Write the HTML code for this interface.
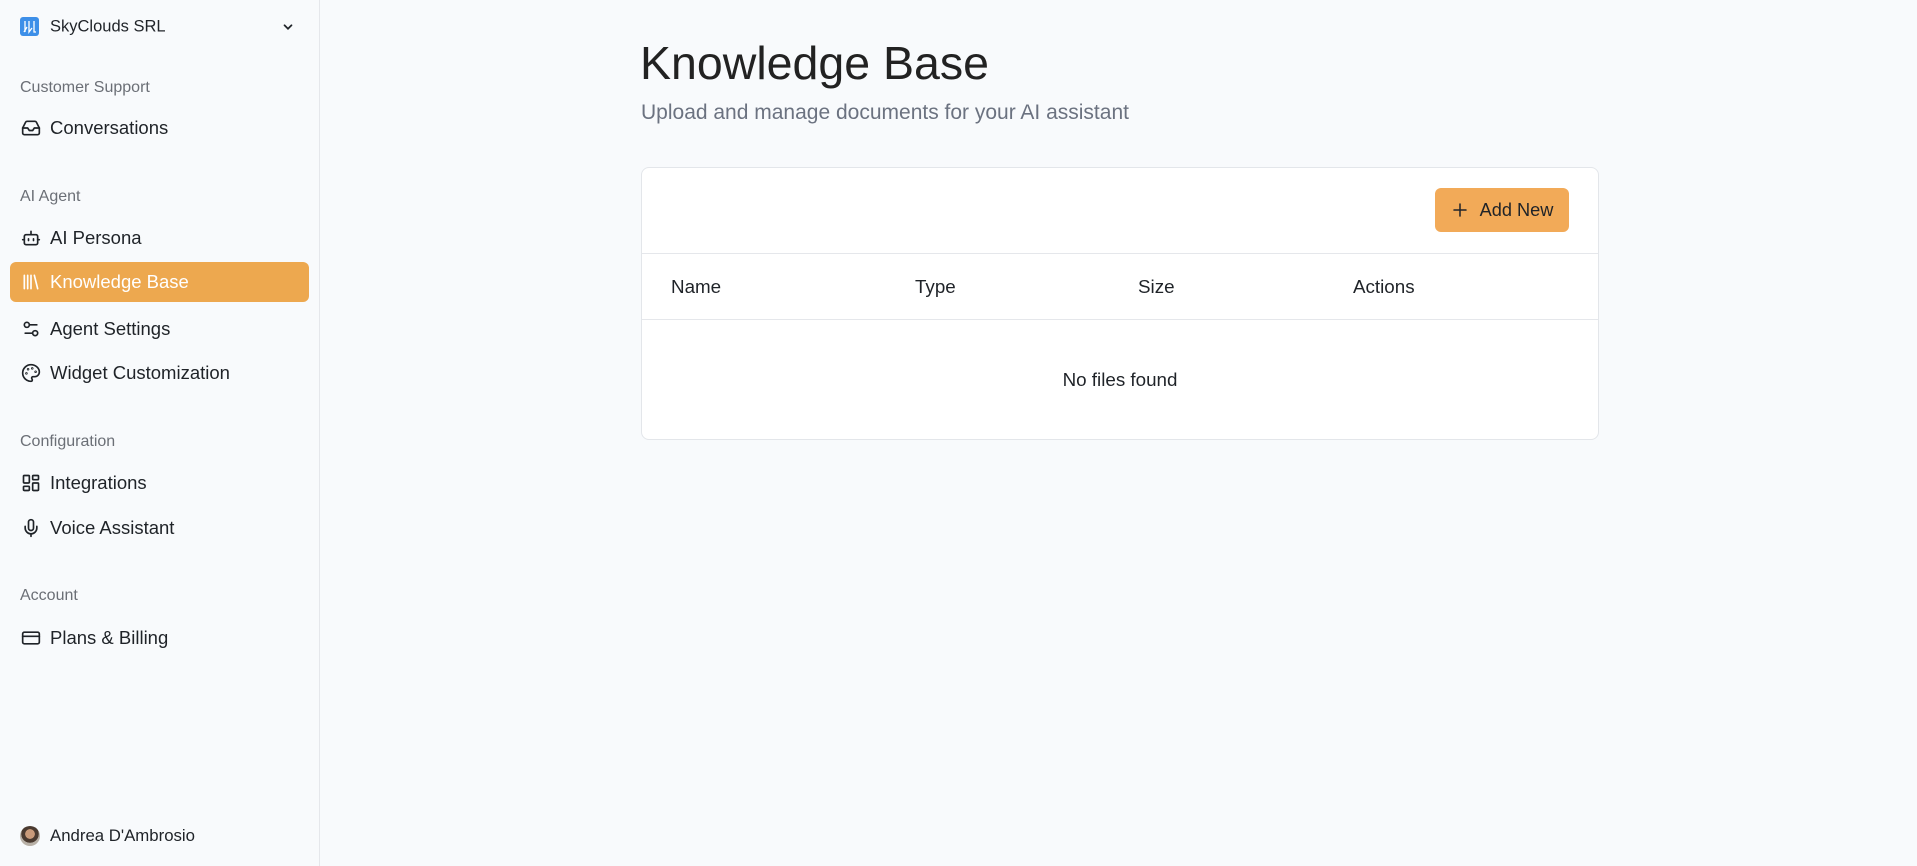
<!DOCTYPE html>
<html><head><meta charset="utf-8"><style>
*{box-sizing:border-box;margin:0;padding:0}
body{width:1917px;height:866px;background:#f8fafc;font-family:"Liberation Sans",sans-serif;color:#1f2328;position:relative;overflow:hidden}
.sb{position:absolute;left:0;top:0;width:320px;height:866px;border-right:1px solid #e5e7eb;background:#f8fafc}
.abs{position:absolute}
.lbl{position:absolute;left:20px;font-size:16px;color:#6b6f76;transform:translateY(-50%)}
.item{position:absolute;left:10px;width:299px;height:40px;border-radius:6px;display:flex;align-items:center;padding-left:11px;font-size:18.5px;color:#1f2328;transform:translateY(-50%)}
.item svg{width:20px;height:20px;margin-right:9px;fill:none;stroke:currentColor;stroke-width:2;stroke-linecap:round;stroke-linejoin:round}
.act{background:#eda84f;color:#fff}
.card{position:absolute;left:641px;top:167px;width:958px;height:273px;background:#fff;border:1px solid #e3e6ea;border-radius:8px}
.th{position:absolute;top:287px;font-size:18.8px;transform:translateY(-50%)}
</style></head><body>
<div class="sb">
 <div class="abs" style="left:20px;top:17px;width:19px;height:19px;background:#3d8fe8;border-radius:3px"><svg width="19" height="19" viewBox="0 0 19 19" fill="none" stroke="#fff" stroke-width="1.3"><path d="M5 4v11M4 15l3-5M9 4v11l3-4M14 4v11l2 0"/></svg></div>
 <div class="abs" style="left:50px;top:27px;transform:translateY(-50%);font-size:16.5px">SkyClouds SRL</div>
 <svg class="abs" style="left:281px;top:20px" width="14" height="14" viewBox="0 0 24 24" fill="none" stroke="#1f2328" stroke-width="3" stroke-linecap="round"><path d="M6 9l6 6 6-6"/></svg>
 <div class="lbl" style="top:88px">Customer Support</div>
 <div class="item" style="top:128px"><svg viewBox="0 0 24 24"><path d="M22 12h-6l-2 3h-4l-2-3H2"/><path d="M5.5 5.1L2 12v6a2 2 0 0 0 2 2h16a2 2 0 0 0 2-2v-6l-3.5-6.9A2 2 0 0 0 16.8 4H7.2a2 2 0 0 0-1.7 1.1z"/></svg>Conversations</div>
 <div class="lbl" style="top:197px">AI Agent</div>
 <div class="item" style="top:238px"><svg viewBox="0 0 24 24"><path d="M12 8V4"/><rect x="4" y="8" width="16" height="12" rx="2"/><path d="M2 14h2M20 14h2M15 13v2M9 13v2"/></svg>AI Persona</div>
 <div class="item act" style="top:282px"><svg viewBox="0 0 24 24"><path d="M4 4v16M8 4v16M12 4v16M16 4l4 16"/></svg>Knowledge Base</div>
 <div class="item" style="top:329px"><svg viewBox="0 0 24 24"><path d="M14 17H5M19 7h-9"/><circle cx="17" cy="17" r="3"/><circle cx="7" cy="7" r="3"/></svg>Agent Settings</div>
 <div class="item" style="top:373px"><svg viewBox="0 0 24 24"><circle cx="13.5" cy="6.5" r=".5"/><circle cx="17.5" cy="10.5" r=".5"/><circle cx="8.5" cy="7.5" r=".5"/><circle cx="6.5" cy="12.5" r=".5"/><path d="M12 2C6.5 2 2 6.5 2 12s4.5 10 10 10c.9 0 1.6-.7 1.6-1.7 0-.4-.2-.8-.4-1.1-.3-.3-.4-.7-.4-1.1a1.6 1.6 0 0 1 1.6-1.7h2c3.1 0 5.6-2.5 5.6-5.6C22 6 17.5 2 12 2z"/></svg>Widget Customization</div>
 <div class="lbl" style="top:442px">Configuration</div>
 <div class="item" style="top:483px"><svg viewBox="0 0 24 24"><rect x="3" y="3" width="7" height="9" rx="1"/><rect x="14" y="3" width="7" height="5" rx="1"/><rect x="14" y="12" width="7" height="9" rx="1"/><rect x="3" y="16" width="7" height="5" rx="1"/></svg>Integrations</div>
 <div class="item" style="top:528px"><svg viewBox="0 0 24 24"><path d="M12 2a3 3 0 0 0-3 3v7a3 3 0 0 0 6 0V5a3 3 0 0 0-3-3z"/><path d="M19 10v2a7 7 0 0 1-14 0v-2M12 19v3"/></svg>Voice Assistant</div>
 <div class="lbl" style="top:596px">Account</div>
 <div class="item" style="top:638px"><svg viewBox="0 0 24 24"><rect x="2" y="5" width="20" height="14" rx="2"/><path d="M2 10h20"/></svg>Plans &amp; Billing</div>
 <div class="abs" style="left:20px;top:826px;width:20px;height:20px;border-radius:50%;background:radial-gradient(circle at 50% 40%,#c99a7a 0 30%,#4a3a30 32% 55%,#b8b0a6 57%)"></div>
 <div class="abs" style="left:50px;top:836px;transform:translateY(-50%);font-size:16.8px">Andrea D'Ambrosio</div>
</div>
<div class="abs" style="left:640px;top:63px;transform:translateY(-50%);font-size:46.5px;color:#222">Knowledge Base</div>
<div class="abs" style="left:641px;top:113px;transform:translateY(-50%);font-size:21px;color:#6b7280">Upload and manage documents for your AI assistant</div>
<div class="card">
 <div class="abs" style="left:793px;top:20px;width:134px;height:44px;background:#f2aa58;border-radius:6px;display:flex;align-items:center;justify-content:center;font-size:18.2px;color:#1f2328"><svg width="18" height="18" viewBox="0 0 24 24" fill="none" stroke="#1f2328" stroke-width="2" stroke-linecap="round" style="margin-right:11px"><path d="M12 4v16M4 12h16"/></svg>Add New</div>
 <div class="abs" style="left:0;top:85px;width:100%;border-top:1px solid #e5e7eb"></div>
 <div class="abs" style="left:0;top:151px;width:100%;border-top:1px solid #e5e7eb"></div>
</div>
<div class="th" style="left:671px">Name</div>
<div class="th" style="left:915px">Type</div>
<div class="th" style="left:1138px">Size</div>
<div class="th" style="left:1353px">Actions</div>
<div class="abs" style="left:1120px;top:380px;transform:translate(-50%,-50%);font-size:18.8px">No files found</div>
</body></html>
